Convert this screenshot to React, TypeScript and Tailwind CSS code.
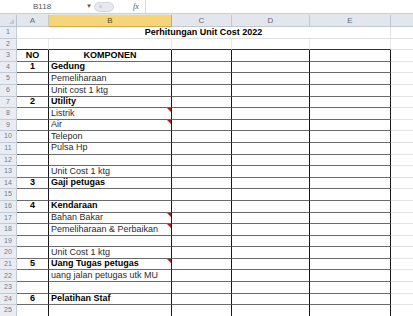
import React from "react";

type Row = { no?: string; item?: string; bold?: boolean; note?: boolean };

const rows: Row[] = [
  { no: "NO", item: "KOMPONEN", bold: true },
  { no: "1", item: "Gedung", bold: true },
  { item: "Pemeliharaan" },
  { item: "Unit cost 1 ktg" },
  { no: "2", item: "Utility", bold: true },
  { item: "Listrik", note: true },
  { item: "Air", note: true },
  { item: "Telepon" },
  { item: "Pulsa Hp" },
  {},
  { item: "Unit Cost 1 ktg" },
  { no: "3", item: "Gaji petugas", bold: true },
  {},
  { no: "4", item: "Kendaraan", bold: true },
  { item: "Bahan Bakar", note: true },
  { item: "Pemeliharaan & Perbaikan", note: true },
  {},
  { item: "Unit Cost 1 ktg" },
  { no: "5", item: "Uang Tugas petugas", bold: true, note: true },
  { item: "uang jalan petugas utk MU" },
  {},
  { no: "6", item: "Pelatihan Staf", bold: true },
  {},
];

const cols = ["A", "B", "C", "D", "E"];

function RowHead({ n }: { n: number }) {
  return (
    <div className="flex items-center justify-center bg-[#e9edf3] border-r border-b border-[#c3cad4] text-[7px] text-[#6d7b8d]">
      {n}
    </div>
  );
}

function Note() {
  return (
    <svg className="absolute top-0 right-0" width="4" height="4" viewBox="0 0 4 4">
      <polygon points="0,0 4,0 4,4" fill="#c0141c" />
    </svg>
  );
}

export default function App() {
  return (
    <div className="w-[413px] h-[316px] overflow-hidden bg-white font-['Liberation_Sans',Arial,sans-serif] text-[#222]">
      {/* formula bar */}
      <div className="h-[14px] flex items-center bg-white border-b border-[#c9d0d9]">
        <div className="w-[86px] pl-[33px] text-[8px] text-[#555]">B118</div>
        <div className="text-[6px] text-[#555] w-[8px]">▼</div>
        <div className="w-[20px] h-[10px] rounded-full bg-[#e6e9ed] border border-[#d3d8de] flex items-center pl-[4px]">
          <div className="w-[3px] h-[3px] rounded-full bg-[#c9ced5]" />
        </div>
        <div className="ml-[19px] text-[8px] italic font-['Liberation_Serif',serif] text-[#555]">fx</div>
        <div className="flex-1 h-full ml-[6px] border-l border-[#d6dbe1]" />
      </div>
      <div className="h-[1px] bg-[#e3e7ec]" />

      <div className="grid grid-cols-[17px_32px_123px_60px_78px_81px_1fr] grid-rows-[12px] auto-rows-[11.6px]">
        {/* header row */}
        <div className="relative bg-[#e3e7ed] border-r border-b border-[#b9c1cc]">
          <svg className="absolute right-[2px] bottom-[2px]" width="5" height="5" viewBox="0 0 5 5">
            <polygon points="5,0 5,5 0,5" fill="#c3c9d1" />
          </svg>
        </div>
        {cols.map((c) => (
          <div
            key={c}
            className={
              c === "B"
                ? "flex items-center justify-center bg-[#f6d47a] border-r border-b border-[#e0a940] text-[8px] text-[#5a4a26]"
                : "flex items-center justify-center bg-[#e3e7ed] border-r border-b border-[#c0c8d2] text-[8px] text-[#5e6a79]"
            }
          >
            {c}
          </div>
        ))}
        <div className="bg-[#e3e7ed] border-b border-[#c0c8d2]" />

        {/* row 1 */}
        <RowHead n={1} />
        <div className="col-span-5 flex items-center justify-center whitespace-nowrap font-bold text-[9px] text-black border-r border-b border-[#e1e1e1]">
          Perhitungan Unit Cost 2022
        </div>
        <div className="border-b border-[#e1e1e1]" />

        {/* row 2 */}
        <RowHead n={2} />
        {cols.map((c) => (
          <div key={c} className="border-b border-r border-b-[#333] border-r-[#e8e8e8]" />
        ))}
        <div className="border-b border-[#e1e1e1]" />

        {rows.map((r, i) => (
          <React.Fragment key={i}>
            <RowHead n={i + 3} />
            <div className="flex items-center justify-center border-r border-b border-r-[#1a1a1a] border-b-[#6a6a6a] font-bold text-[9px] text-black">
              {r.no}
            </div>
            <div
              className={
                (r.bold ? "font-bold text-black " : "text-[#2b2b2b] ") +
                (i === 0 ? "justify-center " : "pl-[2px] ") +
                "relative flex items-center whitespace-nowrap border-r border-b border-r-[#1a1a1a] border-b-[#6a6a6a] text-[9px]"
              }
            >
              {r.item}
              {r.note && <Note />}
            </div>
            <div className="border-r border-b border-r-[#1a1a1a] border-b-[#6a6a6a]" />
            <div className="border-r border-b border-r-[#1a1a1a] border-b-[#6a6a6a]" />
            <div className="border-r border-b border-r-[#1a1a1a] border-b-[#6a6a6a]" />
            <div className="border-b border-[#e3e3e3]" />
          </React.Fragment>
        ))}
      </div>
    </div>
  );
}
